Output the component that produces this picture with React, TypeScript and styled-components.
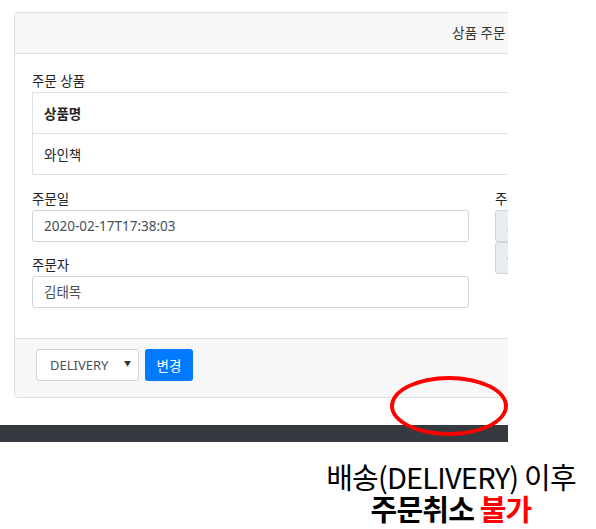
import styled, { createGlobalStyle } from "styled-components";

const GlobalStyle = createGlobalStyle`
body{
    margin:0;
    background:#fff;
    font-family: "Noto Sans", "Noto Sans CJK KR", sans-serif;
    font-size: 13.5px;
    color:#212529;
}
`;

const Page = styled.div`
position: relative;
width: 596px;
height: 529px;
overflow: hidden;
`;

const Frame = styled.div`
width: 508px;
overflow: hidden;
padding-top: 12px;
`;

const Card = styled.div`
width: 956px;
margin-left: 14px;
border: 1px solid #dfdfdf;
border-radius: 3px;
background: #fff;
`;

const CardHeader = styled.div`
height: 40px;
line-height: 40px;
text-align: center;
background: #f7f7f7;
border-bottom: 1px solid #dfdfdf;
color: #333;
`;

const CardBody = styled.div`
padding: 17px;
`;

const Label = styled.div`
line-height: 20px;
height: 20px;
margin-bottom: 1px;
`;

const Table = styled.table`
width: 100%;
border-collapse: collapse;
margin-bottom: 14px;
th, td{
    border: 1px solid #dee2e6;
    height: 40px;
    padding: 0 11px;
    text-align: left;
}
th{ font-weight: 700; }
`;

const Columns = styled.div`
display: grid;
grid-template-columns: 437px 437px;
column-gap: 26px;
`;

const Group = styled.div`
margin-bottom: 13px;
`;

const Input = styled.div<{ $disabled?: boolean }>`
height: 30px;
line-height: 30px;
padding: 0 11px;
border: 1px solid #ced4da;
border-radius: 3px;
color: #495057;
background: ${(p) => (p.$disabled ? "#e9ecef" : "#fff")};
white-space: nowrap;
`;

const CardFooter = styled.div`
display: flex;
align-items: center;
gap: 6px;
padding: 10px 17px 16px 21px;
background: #f7f7f7;
border-top: 1px solid #dfdfdf;
`;

const Select = styled.div`
box-sizing: border-box;
width: 103px;
height: 32px;
display: flex;
align-items: center;
justify-content: space-between;
padding: 0 7px 0 13px;
border: 1px solid #ced4da;
border-radius: 3px;
background: #fff;
color: #495057;
font-size: 13px;
span{
    font-size: 7px;
    color: #333;
    margin-top: -4px;
}
`;

const Button = styled.button`
height: 32px;
width: 48px;
border: none;
border-radius: 3px;
background: #007bff;
color: #fff;
font-family: inherit;
font-size: 13.5px;
`;

const DarkBar = styled.div`
height: 17px;
margin-top: 27px;
background: #343a40;
`;

const Note = styled.div`
margin: 18px 0 0 300px;
width: 302px;
text-align: center;
font-family: "Noto Sans CJK KR", sans-serif;
font-size: 29px;
line-height: 32px;
letter-spacing: -0.8px;
color: #000;
white-space: nowrap;
b{ font-weight: 700; }
em{ font-style: normal; font-weight: 700; color: #ff0000; }
`;

const Circle = styled.div`
position: absolute;
left: 390px;
top: 376px;
width: 110px;
height: 52px;
border: 4px solid #ff0000;
border-radius: 50%;
`;

function App() {
    return (
        <Page>
            <GlobalStyle />
            <Frame>
                <Card>
                    <CardHeader>상품 주문 정보</CardHeader>
                    <CardBody>
                        <Label>주문 상품</Label>
                        <Table>
                            <tbody>
                                <tr><th>상품명</th></tr>
                                <tr><td>와인책</td></tr>
                            </tbody>
                        </Table>
                        <Columns>
                            <div>
                                <Group>
                                    <Label>주문일</Label>
                                    <Input>2020-02-17T17:38:03</Input>
                                </Group>
                                <Group>
                                    <Label>주문자</Label>
                                    <Input>김태목</Input>
                                </Group>
                            </div>
                            <div>
                                <Group>
                                    <Label>주문 상태</Label>
                                    <Input $disabled>2020-02-17</Input>
                                    <Input $disabled>-</Input>
                                </Group>
                            </div>
                        </Columns>
                    </CardBody>
                    <CardFooter>
                        <Select>DELIVERY<span>▼</span></Select>
                        <Button>변경</Button>
                    </CardFooter>
                </Card>
                <DarkBar />
            </Frame>
            <Note>
                배송(DELIVERY) 이후<br />
                <b>주문취소</b> <em>불가</em>
            </Note>
            <Circle />
        </Page>
    );
}

export default App;
